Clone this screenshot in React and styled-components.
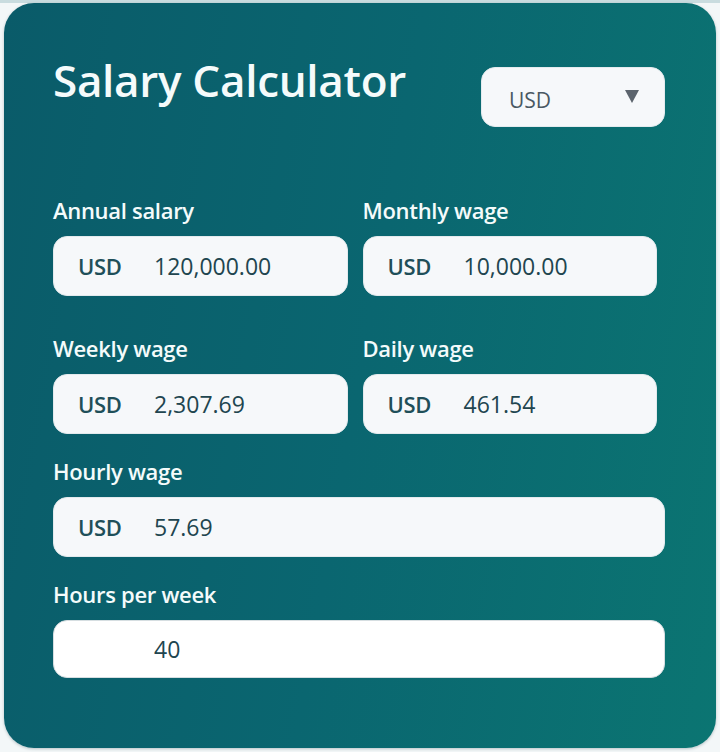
import React from 'react';
import styled, { createGlobalStyle } from 'styled-components';

const GlobalStyle = createGlobalStyle`
    html, body {
        margin: 0;
        padding: 0;
        background: #f3f7f8;
    }
    body {
        font-family: "Open Sans", "Noto Sans", sans-serif;
    }
`;

const fields = [
    { label: 'Annual salary', value: '120,000.00' },
    { label: 'Monthly wage', value: '10,000.00' },
    { label: 'Weekly wage', value: '2,307.69' },
    { label: 'Daily wage', value: '461.54' },
];

function App() {
    return (
        <Page>
            <GlobalStyle />
            <Card>
                <Header>
                    <Title>Salary Calculator</Title>
                    <Select>
                        <span>USD</span>
                        <svg width="14" height="13" viewBox="0 0 14 13">
                            <polygon points="0,0 14,0 7,13" fill="#5c646d" />
                        </svg>
                    </Select>
                </Header>
                <Form>
                    <Grid>
                        {fields.map((f) => (
                            <Field key={f.label}>
                                <Label>{f.label}</Label>
                                <InputBox>
                                    <Currency>USD</Currency>
                                    <Value>{f.value}</Value>
                                </InputBox>
                            </Field>
                        ))}
                    </Grid>
                    <Field>
                        <Label>Hourly wage</Label>
                        <InputBox>
                            <Currency>USD</Currency>
                            <Value>57.69</Value>
                        </InputBox>
                    </Field>
                    <Field>
                        <Label>Hours per week</Label>
                        <InputBox $plain>
                            <Currency />
                            <Value>40</Value>
                        </InputBox>
                    </Field>
                </Form>
            </Card>
        </Page>
    );
}

export default App;

// 바깥 배경
const Page = styled.div`
    width: 720px;
    height: 752px;
    box-sizing: border-box;
    padding: 3px 4px 0;
    background: linear-gradient(#c9dcdf 0 3px, #f3f7f8 3px);
`;

// 계산기 카드
const Card = styled.div`
    width: 712px;
    height: 745px;
    box-sizing: border-box;
    padding: 52px 51px 0 49px;
    border-radius: 30px;
    background: linear-gradient(100deg, #0a5b69 0%, #0a6670 50%, #0b7572 100%);
    box-shadow: 0 1px 3px rgba(0, 40, 50, 0.25);
`;

// 제목 + 통화 선택
const Header = styled.div`
    display: flex;
    justify-content: space-between;
    align-items: flex-start;
`;

const Title = styled.h1`
    margin: 0;
    font-size: 44px;
    line-height: 50px;
    font-weight: 600;
    color: #f5fbfb;
    letter-spacing: -0.3px;
`;

const Select = styled.div`
    margin-top: 12px;
    width: 184px;
    height: 60px;
    box-sizing: border-box;
    padding: 0 25px 0 27px;
    display: flex;
    align-items: center;
    justify-content: space-between;
    background: #f6f8fa;
    border: 1px solid #e4ebee;
    border-radius: 14px;

    span {
        font-size: 21px;
        font-weight: 400;
        color: #4a5863;
        padding-top: 5px;
    }

    svg {
        margin-top: -2px;
    }
`;

const Form = styled.div`
    margin-top: 70px;
    display: flex;
    flex-direction: column;
    gap: 24px;
`;

const Grid = styled.div`
    width: 604px;
    display: grid;
    grid-template-columns: 1fr 1fr;
    column-gap: 15px;
    row-gap: 39px;
`;

const Field = styled.div`
    display: flex;
    flex-direction: column;
    gap: 13px;
`;

const Label = styled.div`
    font-size: 22px;
    line-height: 26px;
    font-weight: 600;
    color: #f4fbfb;
    letter-spacing: -0.3px;
`;

// 입력 칸
const InputBox = styled.div`
    height: ${(p) => (p.$plain ? '58px' : '60px')};
    box-sizing: border-box;
    padding: 0 24px;
    display: flex;
    align-items: center;
    background: ${(p) => (p.$plain ? '#ffffff' : '#f6f8fa')};
    border: 1px solid ${(p) => (p.$plain ? '#d6dee1' : '#e3eaed')};
    border-radius: 14px;
`;

const Currency = styled.span`
    width: 76px;
    font-size: 22px;
    font-weight: 600;
    color: #1f4f59;
    letter-spacing: -0.3px;
`;

const Value = styled.span`
    font-size: 23px;
    font-weight: 500;
    color: #21454f;
`;
